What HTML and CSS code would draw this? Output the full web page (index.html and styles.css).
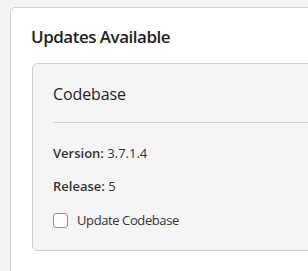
FILE: index.html
```html
<!DOCTYPE html>
<html lang="en">
<head>
<meta charset="utf-8">
<title>Updates</title>
<link rel="stylesheet" href="styles.css">
</head>
<body>
<div class="page">
  <section class="panel">
    <h2 class="panel-title">Updates Available</h2>
    <div class="update-card">
      <h3 class="card-title">Codebase</h3>
      <hr class="card-divider">
      <p class="meta"><strong>Version:</strong> 3.7.1.4</p>
      <p class="meta"><strong>Release:</strong> 5</p>
      <label class="check"><input type="checkbox" class="check-box"><span>Update Codebase</span></label>
    </div>
  </section>
</div>
</body>
</html>
```
FILE: styles.css
```css
html, body {
  margin: 0;
  background: #f4f4f4;
  overflow: hidden;
}
body {
  font-family: "Segoe UI", "Open Sans", sans-serif;
  color: #1f1f1f;
}
.page {
  padding: 7px 0 0 10px;
}
.panel {
  width: 340px;
  background: #fff;
  border: 1px solid #cfcfcf;
  border-radius: 5px;
  padding: 17px 0 30px 20px;
}
.panel-title {
  margin: 0 0 14px 0;
  font-size: 17px;
  line-height: 24px;
  font-weight: 600;
  letter-spacing: -0.5px;
}
.update-card {
  background: #f5f5f5;
  border: 1px solid #cfcfcf;
  border-radius: 5px;
  margin-left: 1px;
  padding: 19px 0 21px 20px;
}
.card-title {
  margin: 0;
  font-size: 16px;
  line-height: 22px;
  font-weight: 500;
  letter-spacing: -0.1px;
}
.card-divider {
  margin: 17px 0 0 0;
  border: 0;
  border-top: 1px solid #cfcfcf;
  height: 0;
}
.meta {
  margin: 21px 0 0 0;
  font-size: 13px;
  line-height: 18px;
  color: #333;
}
.meta + .meta {
  margin-top: 15px;
}
.meta strong {
  font-weight: 600;
}
.check {
  margin-top: 16px;
  display: flex;
  align-items: center;
  gap: 9px;
  font-size: 13px;
  line-height: 18px;
  letter-spacing: -0.4px;
  color: #333;
}
.check-box {
  appearance: none;
  -webkit-appearance: none;
  margin: 0;
  width: 15px;
  height: 15px;
  border: 1px solid #8f8f8f;
  border-radius: 3px;
  background: #fff;
}
```
